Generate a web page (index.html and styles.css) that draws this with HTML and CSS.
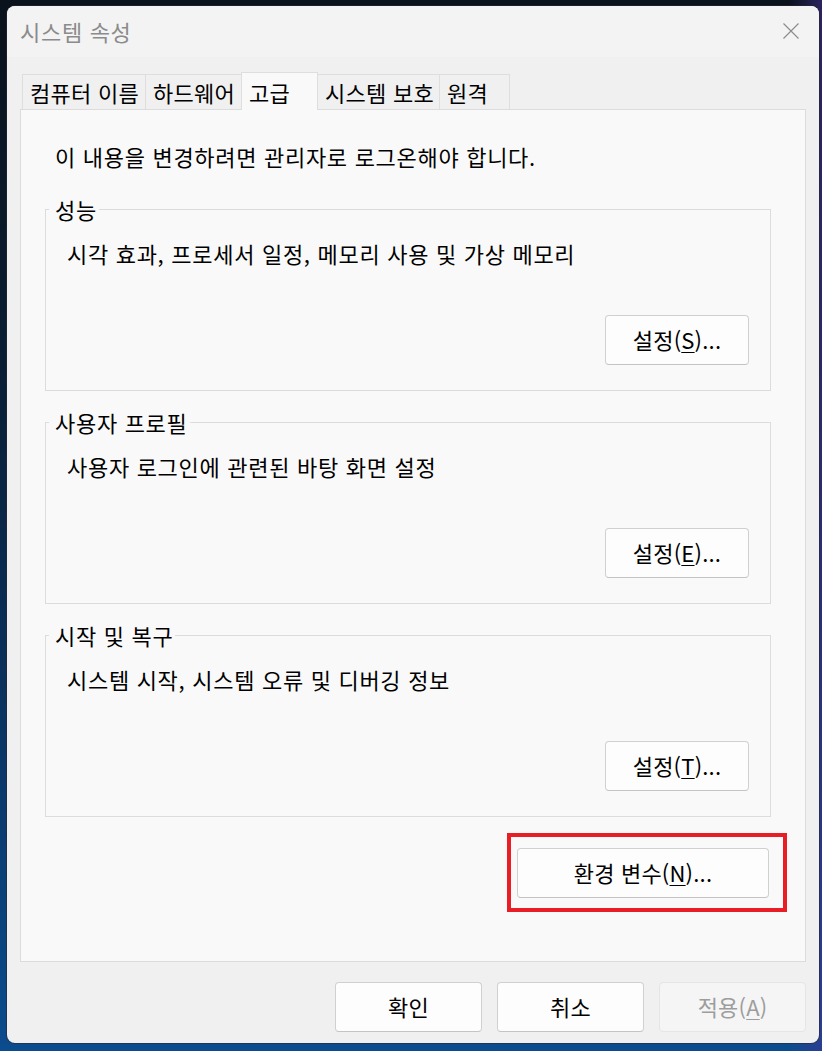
FILE: index.html
```html
<!DOCTYPE html>
<html lang="ko">
<head>
<meta charset="utf-8">
<title>시스템 속성</title>
<link rel="stylesheet" href="styles.css">
</head>
<body>
<div class="window">
  <div class="titlebar">
    <span class="title">시스템 속성</span>
    <span class="close"><svg width="16" height="16" viewBox="0 0 16 16"><path d="M0.5 0.5 L15.5 15.5 M15.5 0.5 L0.5 15.5" stroke="#8a8a8a" stroke-width="1.1" fill="none"/></svg></span>
  </div>
  <div class="client">
    <div class="tabs">
      <div class="tab t1">컴퓨터 이름</div>
      <div class="tab t2">하드웨어</div>
      <div class="tab t3 active">고급</div>
      <div class="tab t4">시스템 보호</div>
      <div class="tab t5">원격</div>
    </div>
    <div class="panel">
      <p class="notice">이 내용을 변경하려면 관리자로 로그온해야 합니다.</p>
      <fieldset class="group">
        <legend>성능</legend>
        <div class="desc">시각 효과, 프로세서 일정, 메모리 사용 및 가상 메모리</div>
        <div class="actions"><button class="btn set">설정(<u>S</u>)...</button></div>
      </fieldset>
      <fieldset class="group">
        <legend>사용자 프로필</legend>
        <div class="desc">사용자 로그인에 관련된 바탕 화면 설정</div>
        <div class="actions"><button class="btn set">설정(<u>E</u>)...</button></div>
      </fieldset>
      <fieldset class="group last">
        <legend>시작 및 복구</legend>
        <div class="desc">시스템 시작, 시스템 오류 및 디버깅 정보</div>
        <div class="actions"><button class="btn set">설정(<u>T</u>)...</button></div>
      </fieldset>
      <div class="env-row">
        <div class="highlight"><button class="btn env">환경 변수(<u>N</u>)...</button></div>
      </div>
    </div>
    <div class="footer">
      <button class="btn foot">확인</button>
      <button class="btn foot">취소</button>
      <button class="btn foot disabled">적용(<u>A</u>)</button>
    </div>
  </div>
</div>
</body>
</html>
```
FILE: styles.css
```css
html, body {
  margin: 0;
  height: 100%;
}
body {
  background:
    linear-gradient(90deg, rgba(0,0,0,0) 96%, rgba(70,50,150,0.55) 100%),
    linear-gradient(180deg, #0a121c 0%, #0a1d33 35%, #0a3564 70%, #0b4c8e 100%);
  font-family: "Noto Sans CJK KR", "Malgun Gothic", sans-serif;
  font-size: 22px;
  letter-spacing: 0.7px;
  color: #000;
  overflow: hidden;
}
.window {
  margin: 6px 0 0 7px;
  width: 812px;
  height: 1037px;
  border-radius: 8px;
  background: #f0f0f0;
  display: flex;
  flex-direction: column;
  overflow: hidden;
  box-shadow: 0 0 0 1px rgba(40, 40, 50, 0.6);
}
.titlebar {
  height: 51px;
  flex: none;
  background: #f3f3f3;
  display: flex;
  align-items: center;
  justify-content: space-between;
  padding: 0 20px 2px 13px;
  box-sizing: border-box;
}
.title {
  color: #8b8b8b;
  line-height: 24px;
}
.close svg {
  display: block;
}
.client {
  flex: 1;
  min-height: 0;
  display: flex;
  flex-direction: column;
  padding: 15px 13px 11px;
}
.tabs {
  display: flex;
  align-items: flex-start;
  height: 38px;
  margin-bottom: -1px;
  padding-left: 2px;
  position: relative;
  z-index: 1;
  flex: none;
}
.tab {
  box-sizing: border-box;
  height: 35px;
  margin-top: 2px;
  margin-left: -1px;
  border: 1px solid #dedede;
  border-bottom: none;
  background: #f0f0f0;
  display: flex;
  align-items: flex-end;
  padding: 0 0 5px 7px;
  line-height: 24px;
  white-space: nowrap;
  letter-spacing: 0.3px;
}
.tab.t1 { width: 124px; margin-left: 0; }
.tab.t2 { width: 97px; }
.tab.t3 { width: 77px; }
.tab.t4 { width: 123px; }
.tab.t5 { width: 71px; }
.tab.active {
  height: 38px;
  margin-top: 0;
  background: #f9f9f9;
  padding-bottom: 6px;
}
.panel {
  flex: 1;
  min-height: 0;
  background: #f9f9f9;
  border: 1px solid #dcdcdc;
  padding: 34px 34px 0 24px;
}
.notice {
  margin: 0 0 29px 10px;
  line-height: 24px;
}
.group {
  margin: 0 0 19px;
  padding: 0;
  min-width: 0;
  border: 1px solid #dcdcdc;
}
.group.last {
  margin-bottom: 0;
}
.group legend {
  margin-left: 3px;
  padding: 0 2px 0 6px;
  line-height: 24px;
}
.desc {
  margin-top: 20px;
  padding-left: 21px;
  line-height: 24px;
}
.actions {
  display: flex;
  justify-content: flex-end;
  padding: 50px 21px 25px 0;
}
.btn {
  box-sizing: border-box;
  height: 50px;
  border: 1px solid #d0d0d0;
  border-bottom-color: #c4c4c4;
  border-radius: 4px;
  background: #fdfdfd;
  font: inherit;
  letter-spacing: 0.2px;
  color: #000;
  padding: 0 0 2px;
  line-height: 24px;
}
.btn u {
  text-decoration-thickness: 1px;
  text-underline-offset: 3px;
}
.btn.set {
  width: 144px;
}
.env-row {
  display: flex;
  justify-content: flex-end;
  margin-top: 31px;
  padding-right: 2px;
}
.highlight {
  position: relative;
}
.highlight::after {
  content: "";
  position: absolute;
  top: -15px;
  left: -10px;
  right: -18px;
  bottom: -14px;
  border: 4px solid #e91d25;
  pointer-events: none;
}
.btn.env {
  width: 252px;
  height: 50px;
}
.footer {
  flex: none;
  display: flex;
  justify-content: flex-end;
  gap: 15px;
  padding-top: 20px;
}
.btn.foot {
  width: 147px;
}
.btn.disabled {
  background: #f5f5f5;
  border-color: #e5e5e5;
  color: #9d9d9d;
}
```
